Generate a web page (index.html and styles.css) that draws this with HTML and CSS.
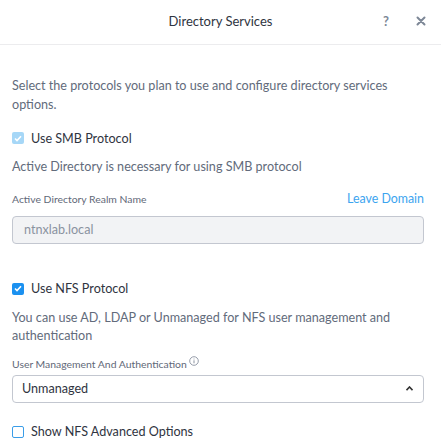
FILE: index.html
```html
<!DOCTYPE html>
<html>
<head>
<meta charset="utf-8">
<link rel="stylesheet" href="styles.css">
</head>
<body>
<div class="dialog">
  <header class="header">
    <div class="title">Directory Services</div>
    <div class="actions">
      <span class="help">?</span>
      <svg class="close" width="10" height="10" viewBox="0 0 10 10"><path d="M1.5 1.5 L8.5 8.5 M8.5 1.5 L1.5 8.5" stroke="#7d8796" stroke-width="2" stroke-linecap="round"/></svg>
    </div>
  </header>
  <main class="content">
    <p class="text intro">Select the protocols you plan to use and configure directory services options.</p>
    <label class="check-row smb">
      <span class="box box-disabled"><svg width="8" height="7" viewBox="0 0 8 7"><path d="M1 3.5 L3 5.5 L7 1.2" fill="none" stroke="#fff" stroke-width="1.6"/></svg></span>
      <span class="check-label">Use SMB Protocol</span>
    </label>
    <p class="text ad-note">Active Directory is necessary for using SMB protocol</p>
    <div class="label-row">
      <span class="small-label">Active Directory Realm Name</span>
      <a class="link">Leave Domain</a>
    </div>
    <div class="input disabled">ntnxlab.local</div>
    <label class="check-row nfs">
      <span class="box box-checked"><svg width="8" height="7" viewBox="0 0 8 7"><path d="M1 3.5 L3 5.5 L7 1.2" fill="none" stroke="#fff" stroke-width="1.6"/></svg></span>
      <span class="check-label">Use NFS Protocol</span>
    </label>
    <p class="text nfs-note">You can use AD, LDAP or Unmanaged for NFS user management and authentication</p>
    <div class="small-label um-label">User Management And Authentication <svg class="info" width="10" height="10" viewBox="0 0 10 10"><circle cx="5" cy="5" r="4.3" fill="none" stroke="#8a92a0" stroke-width="0.9"/><path d="M5 4.3 V7.3 M5 2.6 V3.4" stroke="#8a92a0" stroke-width="1"/></svg></div>
    <div class="input select"><span>Unmanaged</span><svg width="7" height="5" viewBox="0 0 7 5"><path d="M0.5 4.2 L3.5 1 L6.5 4.2" fill="none" stroke="#333" stroke-width="1.6"/></svg></div>
    <label class="check-row adv">
      <span class="box box-empty"></span>
      <span class="check-label">Show NFS Advanced Options</span>
    </label>
  </main>
</div>
</body>
</html>
```
FILE: styles.css
```css
* { box-sizing: border-box; }
html, body { margin: 0; padding: 0; background: #fff; }
body { font-family: Lato, "Open Sans", sans-serif; color: #333; width: 441px; height: 445px; overflow: hidden; }
.header {
  height: 45px;
  border-bottom: 1px solid #ececee;
  display: flex;
  align-items: center;
  justify-content: center;
  position: relative;
}
.title { font-size: 13px; color: #2f3441; margin-top: -2px; }
.actions {
  position: absolute;
  right: 15px;
  top: 13px;
  display: flex;
  align-items: center;
  gap: 27px;
}
.help { font-size: 13px; font-weight: bold; color: #7d8796; }
.close { display: block; }
.content { padding: 32px 17px 0 12px; }
.text { margin: 0; font-size: 12.6px; line-height: 18.5px; color: #626b7b; }
.check-row { display: flex; align-items: center; height: 18px; gap: 7px; }
.check-label { font-size: 12.6px; color: #2f3441; }
.box {
  width: 12px; height: 12px; border-radius: 2px; flex: none;
  display: flex; align-items: center; justify-content: center;
}
.box-disabled { background: #a6d7f7; }
.box-checked { background: #1b91f0; }
.box-empty { border: 1px solid #3a9de8; background: #fff; }
.smb { margin-top: 15px; }
.ad-note { margin-top: 11px; }
.label-row {
  margin-top: 13px; height: 18px;
  display: flex; align-items: center; justify-content: space-between;
}
.small-label { font-size: 10.4px; color: #5f6878; }
.link { font-size: 12.4px; color: #3ca4ef; }
.input {
  margin-top: 8px;
  height: 28px;
  border: 1px solid #c3c7d0;
  border-radius: 4px;
  display: flex; align-items: center;
  font-size: 12.6px;
}
.disabled { background: #f2f3f5; color: #8a92a0; padding-left: 11px; }
.nfs { margin-top: 36px; }
.nfs-note { margin-top: 11px; }
.um-label { margin-top: 11px; height: 14px; line-height: 14px; display: flex; align-items: center; gap: 2px; }
.info { margin-top: -5px; }
.select {
  margin-top: 4px;
  background: #fff; color: #2f3441;
  padding: 0 10px 0 9px;
  justify-content: space-between;
}
.adv { margin-top: 20px; }
```
